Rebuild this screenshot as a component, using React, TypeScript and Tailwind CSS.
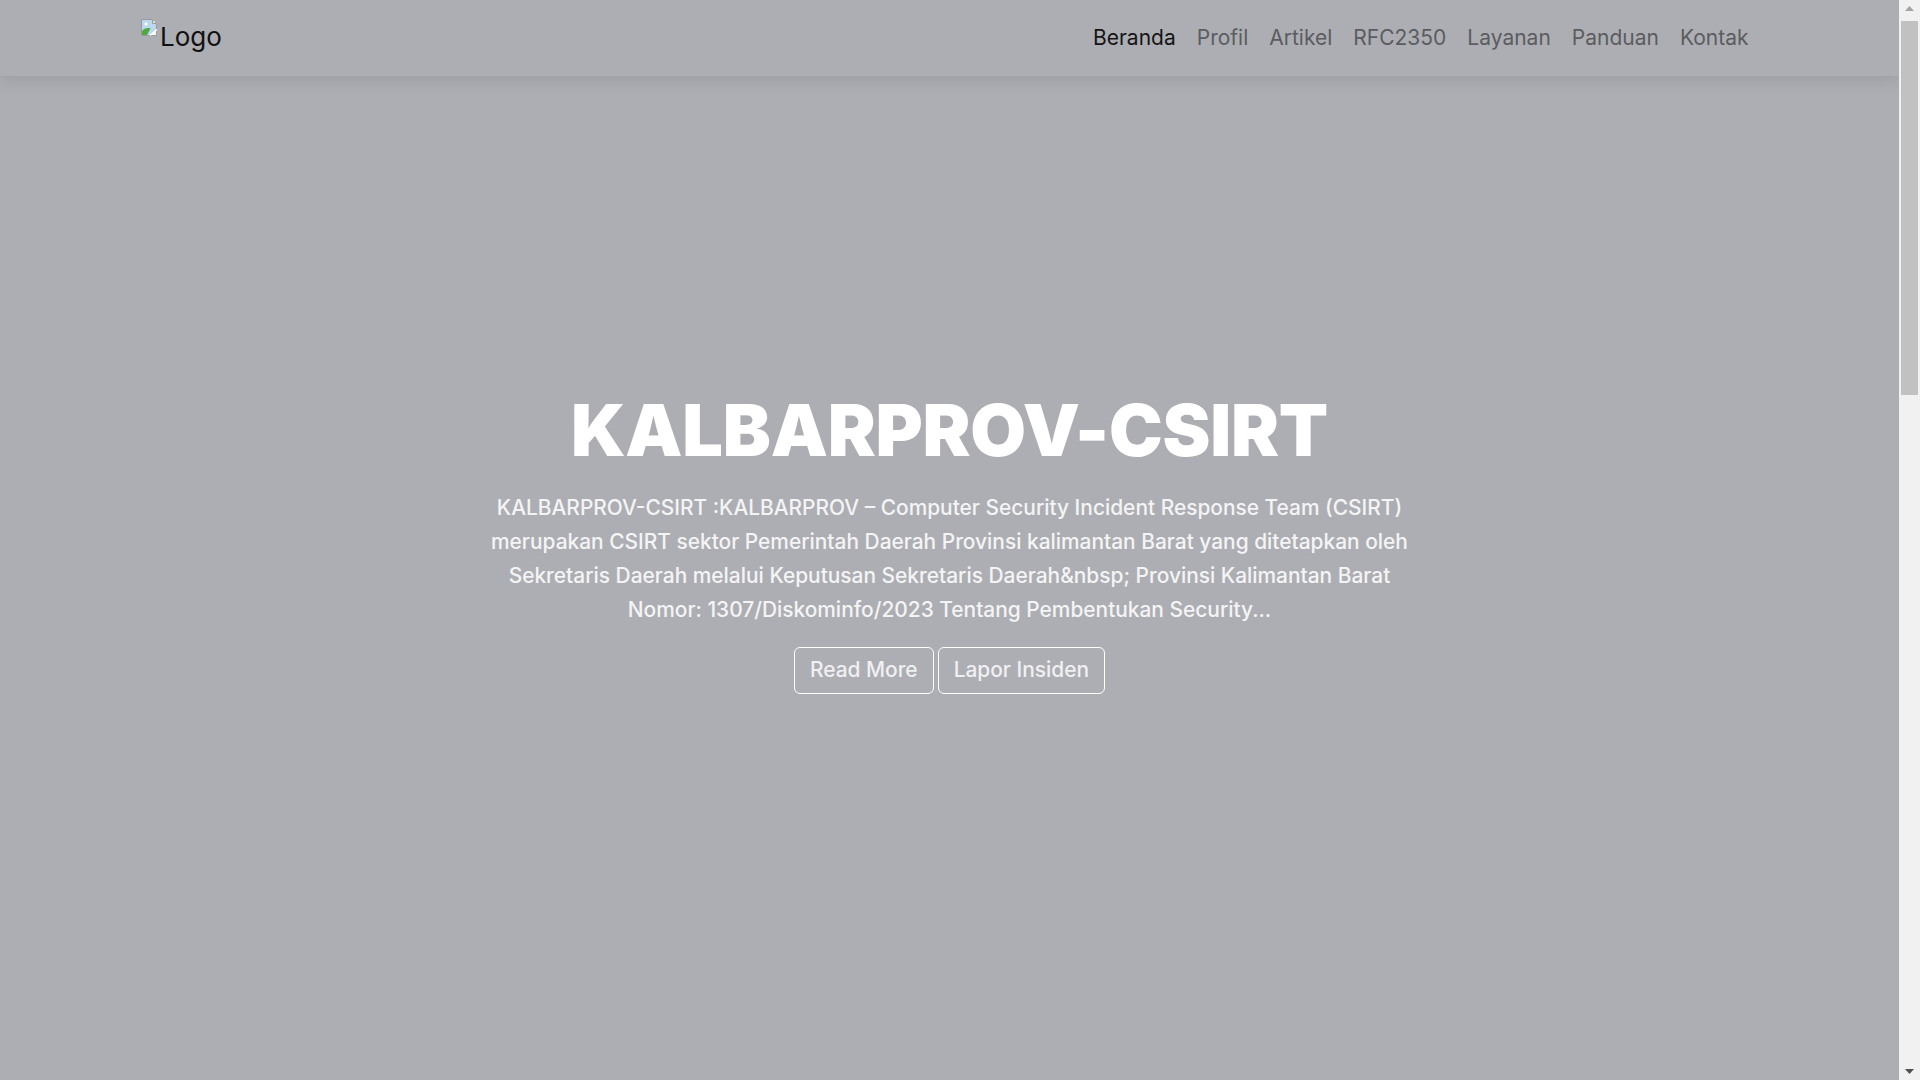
import React from 'react'

const links = ['Beranda', 'Profil', 'Artikel', 'RFC2350', 'Layanan', 'Panduan', 'Kontak']

const BrokenImage: React.FC = () => (
    <svg width="18" height="19" viewBox="0 0 18 19" className="shrink-0">
        <path d="M1.5 1.5h11l4 4v12h-15z" fill="#f4f6f8" stroke="#9a9a9a" />
        <path d="M2 2h10.5v4h3.5v6L10.5 17H2z" fill="#bcd8ef" />
        <path d="M2 13c2.5-2.5 5-3.5 8.5-2.5L7 17H2z" fill="#4fa83d" />
        <circle cx="6" cy="6" r="1.5" fill="#fff" />
        <path d="M12.5 1.5v4h4" fill="#e2e2e2" stroke="#9a9a9a" />
        <path d="M10 17.5l7-6" stroke="#fff" strokeWidth="1.6" />
    </svg>
)

const Navbar: React.FC = () => {
    return (
        <nav className="absolute top-0 left-0 right-0 z-10 h-[76px] bg-[#adaeb3] shadow-[0_2px_18px_rgba(0,0,0,0.12)]">
            <div className="flex items-center justify-between h-full pl-[140px] pr-[140px]">
                <a className="flex items-start h-[40px] text-[26px] leading-none text-[#111]">
                    <BrokenImage />
                    <span className="mt-[6px] pl-[2px]">Logo</span>
                </a>
                <ul className="flex items-center">
                    {links.map((l, i) => (
                        <li key={l}>
                            <a className={`block px-[10.5px] text-[21px] ${i === 0 ? 'text-[#151515]' : 'text-[#5b5c60]'}`}>{l}</a>
                        </li>
                    ))}
                </ul>
            </div>
        </nav>
    )
}

const Scrollbar: React.FC = () => (
    <div className="flex flex-col w-[21px] shrink-0 bg-[#f1f1f1]">
        <div className="flex items-center justify-center h-[17px]">
            <svg width="9" height="5" viewBox="0 0 9 5"><path d="M0 5L4.5 0 9 5z" fill="#a3a3a3" /></svg>
        </div>
        <div className="flex-1 px-[2px] pt-[4px]">
            <div className="h-[374px] bg-[#c1c1c1]" />
        </div>
        <div className="flex items-center justify-center h-[17px]">
            <svg width="9" height="5" viewBox="0 0 9 5"><path d="M0 0L4.5 5 9 0z" fill="#505050" /></svg>
        </div>
    </div>
)

export default function App() {
    return (
        <div className="flex h-screen overflow-hidden bg-[#adaeb3]" style={{ fontFamily: 'Inter, "Noto Sans", sans-serif' }}>
            <main className="relative flex-1 overflow-hidden">
                <Navbar />
                <section className="flex items-center justify-center h-screen">
                    <div className="flex flex-col items-center text-center text-white pt-[7px]">
                        <h1 className="text-[72px] font-black tracking-[-0.25px] leading-none">KALBARPROV-CSIRT</h1>
                        <p className="mt-[25px] max-w-[955px] text-[20.9px] font-medium leading-[34px] text-[#f4f4f5]">
                            KALBARPROV-CSIRT :KALBARPROV – Computer Security Incident Response Team (CSIRT) merupakan CSIRT sektor Pemerintah Daerah Provinsi kalimantan Barat yang ditetapkan oleh Sekretaris Daerah melalui Keputusan Sekretaris Daerah&amp;nbsp; Provinsi Kalimantan Barat Nomor: 1307/Diskominfo/2023 Tentang Pembentukan Security...
                        </p>
                        <div className="flex gap-[4px] mt-[20px]">
                            <a className="px-[15px] h-[47px] flex items-center border border-white rounded-[6px] text-[20.9px] font-medium text-[#f0f0f2]">Read More</a>
                            <a className="px-[15px] h-[47px] flex items-center border border-white rounded-[6px] text-[20.9px] font-medium text-[#f0f0f2]">Lapor Insiden</a>
                        </div>
                    </div>
                </section>
            </main>
            <Scrollbar />
        </div>
    )
}
